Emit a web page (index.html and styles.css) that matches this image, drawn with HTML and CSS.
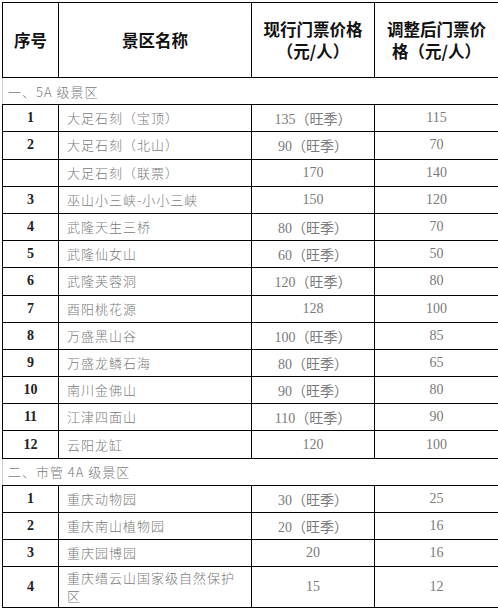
FILE: index.html
```html
<!DOCTYPE html>
<html lang="zh-CN">
<head>
<meta charset="utf-8">
<title>景区门票价格调整表</title>
<link rel="stylesheet" href="styles.css">
</head>
<body>
<table class="price-table">
  <colgroup>
    <col class="c-no">
    <col class="c-name">
    <col class="c-now">
    <col class="c-new">
  </colgroup>
  <thead>
    <tr class="head-row">
      <th>序号</th>
      <th>景区名称</th>
      <th>现行门票价格<br>（元/人）</th>
      <th>调整后门票价<br>格（元/人）</th>
    </tr>
  </thead>
  <tbody>
    <tr class="section"><td colspan="4">一、5A 级景区</td></tr>
    <tr><td class="no">1</td><td class="name">大足石刻（宝顶）</td><td class="num">135（旺季）</td><td class="num">115</td></tr>
    <tr><td class="no">2</td><td class="name">大足石刻（北山）</td><td class="num">90（旺季）</td><td class="num">70</td></tr>
    <tr><td class="no"></td><td class="name">大足石刻（联票）</td><td class="num">170</td><td class="num">140</td></tr>
    <tr><td class="no">3</td><td class="name">巫山小三峡-小小三峡</td><td class="num">150</td><td class="num">120</td></tr>
    <tr><td class="no">4</td><td class="name">武隆天生三桥</td><td class="num">80（旺季）</td><td class="num">70</td></tr>
    <tr><td class="no">5</td><td class="name">武隆仙女山</td><td class="num">60（旺季）</td><td class="num">50</td></tr>
    <tr><td class="no">6</td><td class="name">武隆芙蓉洞</td><td class="num">120（旺季）</td><td class="num">80</td></tr>
    <tr><td class="no">7</td><td class="name">酉阳桃花源</td><td class="num">128</td><td class="num">100</td></tr>
    <tr><td class="no">8</td><td class="name">万盛黑山谷</td><td class="num">100（旺季）</td><td class="num">85</td></tr>
    <tr><td class="no">9</td><td class="name">万盛龙鳞石海</td><td class="num">80（旺季）</td><td class="num">65</td></tr>
    <tr><td class="no">10</td><td class="name">南川金佛山</td><td class="num">90（旺季）</td><td class="num">80</td></tr>
    <tr><td class="no">11</td><td class="name">江津四面山</td><td class="num">110（旺季）</td><td class="num">90</td></tr>
    <tr><td class="no">12</td><td class="name">云阳龙缸</td><td class="num">120</td><td class="num">100</td></tr>
    <tr class="section"><td colspan="4">二、市管 4A 级景区</td></tr>
    <tr><td class="no">1</td><td class="name">重庆动物园</td><td class="num">30（旺季）</td><td class="num">25</td></tr>
    <tr><td class="no">2</td><td class="name">重庆南山植物园</td><td class="num">20（旺季）</td><td class="num">16</td></tr>
    <tr><td class="no">3</td><td class="name">重庆园博园</td><td class="num">20</td><td class="num">16</td></tr>
    <tr class="tall"><td class="no">4</td><td class="name">重庆缙云山国家级自然保护区</td><td class="num">15</td><td class="num">12</td></tr>
  </tbody>
</table>
</body>
</html>
```
FILE: styles.css
```css
html, body {
  margin: 0;
  padding: 0;
  background: #fff;
}

body {
  padding: 2px 0 0 2px;
  font-family: "Liberation Serif", "Noto Sans CJK SC", serif;
}

.price-table {
  border-collapse: collapse;
  table-layout: fixed;
  width: 496px;
}

.c-no { width: 56px; }
.c-name { width: 193px; }
.c-now { width: 123px; }
.c-new { width: 124px; }

.price-table th,
.price-table td {
  border: 1px solid #000;
  padding: 0;
}

.head-row th {
  height: 74px;
  font-family: "Noto Sans CJK SC", sans-serif;
  font-weight: 700;
  font-size: 16.5px;
  line-height: 22px;
  color: #111;
  text-align: center;
  vertical-align: middle;
}

.price-table tbody tr {
  height: 27.2px;
}

.price-table tbody td {
  vertical-align: middle;
  font-size: 13px;
  color: #7a7a7a;
}

.section td {
  border-left: 1px solid #ccc;
  border-right: none;
  padding-left: 5px;
  font-family: "Noto Sans CJK SC", sans-serif;
  font-weight: 300;
  letter-spacing: 1px;
}

.no {
  text-align: center;
  font-weight: 700;
  font-size: 14px !important;
  color: #222 !important;
}

.name {
  padding-left: 8px !important;
  font-family: "Noto Sans CJK SC", sans-serif;
  font-weight: 300;
  letter-spacing: 1px;
  line-height: 18px;
}

.num {
  text-align: center;
  font-size: 14px !important;
}

.price-table tbody tr.tall {
  height: 41px;
}

.tall .name {
  padding-right: 8px !important;
}
```
